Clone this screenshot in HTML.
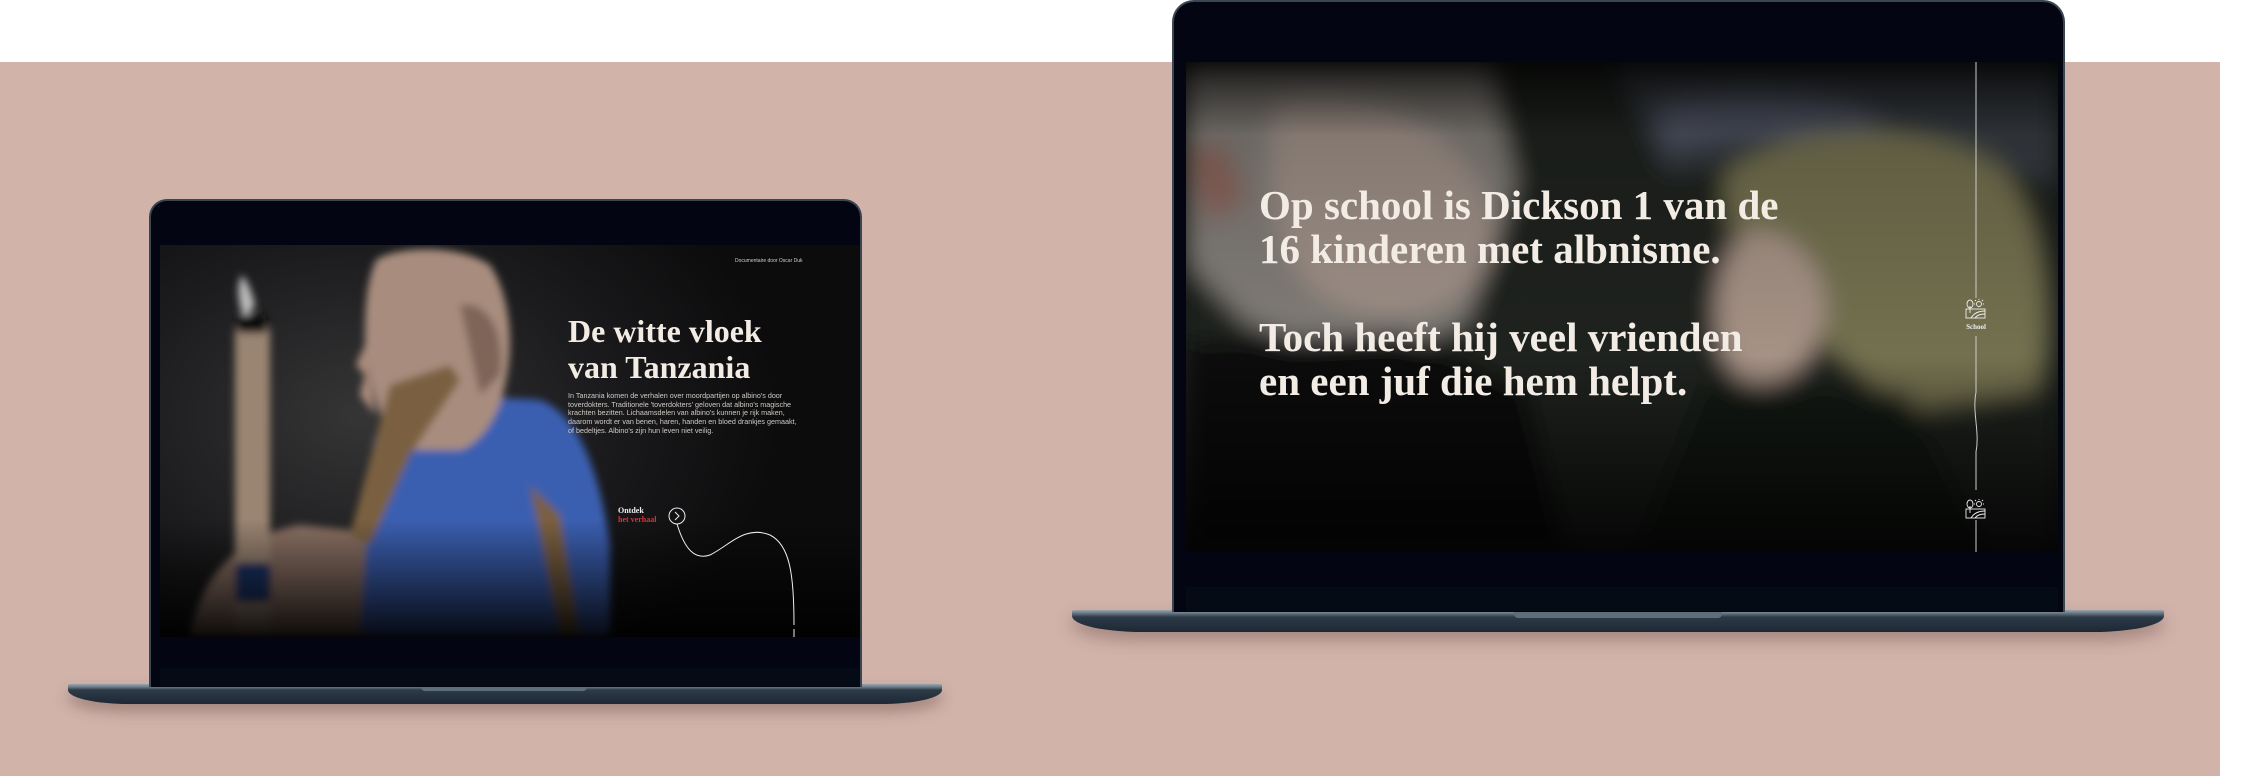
<!DOCTYPE html>
<html><head><meta charset="utf-8"><style>
*{margin:0;padding:0;box-sizing:border-box}
body{width:2254px;height:776px;background:#fff;position:relative;overflow:hidden;font-family:"Liberation Sans",sans-serif}
.abs{position:absolute}
.serif{font-family:"Liberation Serif",serif;font-weight:bold;color:#f3ece4}
</style></head><body>
<div class="abs" style="left:0;top:62px;width:2220px;height:714px;background:#d1b3aa"></div>

<!-- LEFT LAPTOP -->
<div class="abs" style="left:68px;top:684px;width:874px;height:20px;border-radius:2px 2px 60px 60px/2px 2px 14px 14px;background:linear-gradient(#9aa6b0 0,#6c7a86 3px,#2d3a47 6px,#1d2834 100%);box-shadow:0 8px 14px rgba(80,50,45,.35)"></div>
<div class="abs" style="left:421px;top:686px;width:166px;height:5px;background:#5e6d7a;border-radius:0 0 4px 4px"></div>
<div class="abs" style="left:149px;top:199px;width:713px;height:488px;background:#030612;border-radius:18px 18px 0 0;border:2px solid #3a4651;border-bottom:none"></div>
<div class="abs" style="left:160px;top:668px;width:700px;height:18px;background:#050b14"></div>
<div class="abs" style="left:160px;top:245px;width:700px;height:392px;overflow:hidden;background:radial-gradient(ellipse 420px 300px at 200px 170px,#353536,#1a1a1c 60%,#0c0c0d)">
 <svg width="700" height="392" style="position:absolute;left:0;top:0">
  <defs><filter id="b"><feGaussianBlur stdDeviation="4"/></filter>
  <linearGradient id="fade" x1="0" y1="0" x2="0" y2="1"><stop offset=".7" stop-color="#000" stop-opacity="0"/><stop offset="1" stop-color="#000" stop-opacity=".9"/></linearGradient></defs>
  <g filter="url(#b)">
   <path d="M30 392 C40 330 80 290 140 280 L240 290 L250 392Z" fill="#8a6f63"/>
   <path d="M213 200 C220 170 250 150 290 150 L380 155 C420 170 440 230 450 300 L450 392 L200 392Z" fill="#3a5fb0"/>
   <path d="M216 15 C240 0 300 0 330 20 C350 50 355 100 345 140 C340 170 320 200 300 205 L250 205 C225 190 215 160 210 130 L205 100 C205 70 205 40 216 15Z" fill="#a88d7e"/>
   <path d="M205 100 L196 120 L205 130 L200 150 L215 170Z" fill="#b0907f"/>
   <path d="M300 60 C330 55 345 90 340 130 L320 150Z" fill="#7e6558"/>
   <rect x="75" y="82" width="35" height="305" rx="4" fill="#9a8472"/>
   <path d="M82 30 C76 40 78 60 85 75 L95 60 C92 50 90 40 82 30Z" fill="#bbb"/>
   <rect x="78" y="70" width="28" height="18" fill="#111"/>
   <path d="M230 140 L290 120 L300 135 L250 210 L210 300 L190 290Z" fill="#7a6040"/>
   <path d="M370 240 L400 270 L420 392 L400 392Z" fill="#7a6040"/>
   <rect x="75" y="318" width="36" height="40" rx="6" fill="#1e3668"/>
  </g>
  <rect width="700" height="392" fill="url(#fade)"/>
 </svg>
 <div class="abs" style="left:575px;top:13px;font-size:5px;color:#cfcfcf">Documentaire door Oscar Duk</div>
 <div class="abs serif" style="left:408px;top:68px;font-size:32px;line-height:36px;white-space:nowrap">De witte vloek<br>van Tanzania</div>
 <div class="abs" style="left:408px;top:147px;width:232px;font-size:7.2px;line-height:8.7px;color:#cfcac4">In Tanzania komen de verhalen over moordpartijen op albino's door toverdokters. Traditionele 'toverdokters' geloven dat albino's magische krachten bezitten. Lichaamsdelen van albino's kunnen je rijk maken, daarom wordt er van benen, haren, handen en bloed drankjes gemaakt, of bedeltjes. Albino's zijn hun leven niet veilig.</div>
 <div class="abs" style="left:458px;top:261px;font-family:'Liberation Serif',serif;font-weight:bold;font-size:8px;line-height:9px;color:#eee">Ontdek<br><span style="color:#d8323a">het verhaal</span></div>
 <svg class="abs" style="left:0;top:0" width="700" height="392">
  <circle cx="517" cy="271" r="8" fill="none" stroke="#eee" stroke-width="1"/>
  <path d="M515 267 L519 271 L515 275" fill="none" stroke="#eee" stroke-width="1"/>
  <path d="M517 279 C525 305 535 315 550 310 C570 300 585 280 610 290 C630 300 634 330 634 380" fill="none" stroke="#eee" stroke-width="1"/>
  <line x1="634" y1="384" x2="634" y2="392" stroke="#eee" stroke-width="1"/>
 </svg>
</div>

<!-- RIGHT LAPTOP -->
<div class="abs" style="left:1072px;top:610px;width:1092px;height:22px;border-radius:2px 2px 70px 70px/2px 2px 16px 16px;background:linear-gradient(#9aa6b0 0,#6c7a86 3px,#2d3a47 7px,#1d2834 100%);box-shadow:0 8px 16px rgba(80,50,45,.35)"></div>
<div class="abs" style="left:1514px;top:612px;width:208px;height:6px;background:#5e6d7a;border-radius:0 0 4px 4px"></div>
<div class="abs" style="left:1172px;top:0;width:893px;height:612px;background:#030612;border-radius:22px 22px 0 0;border:2px solid #3a4651;border-bottom:none"></div>
<div class="abs" style="left:1186px;top:587px;width:872px;height:24px;background:#050b14"></div>
<div class="abs" style="left:1186px;top:62px;width:872px;height:490px;overflow:hidden;background:#1a1c1a">
 <svg width="872" height="490" style="position:absolute;left:0;top:0">
  <defs><filter id="b2"><feGaussianBlur stdDeviation="12"/></filter>
  <linearGradient id="f2" x1="0" y1="0" x2="0" y2="1"><stop offset="0" stop-color="#000" stop-opacity=".8"/><stop offset=".15" stop-color="#000" stop-opacity=".25"/><stop offset=".6" stop-color="#000" stop-opacity=".1"/><stop offset="1" stop-color="#000" stop-opacity=".85"/></linearGradient></defs>
  <g filter="url(#b2)">
   <rect width="872" height="490" fill="#222624"/>
   <path d="M430 0 L872 0 L872 120 L680 80 L480 110Z" fill="#3e424a"/>
   <path d="M470 40 C560 20 660 30 700 60 L650 90 C600 70 530 70 480 90Z" fill="#5a5f70"/>
   <path d="M0 0 L300 0 L330 120 L280 260 L180 300 L60 260 L0 200Z" fill="#8f8a84"/>
   <path d="M0 90 L40 80 L60 140 L20 160Z" fill="#9a6f65"/>
   <path d="M90 40 C180 20 280 60 310 160 C310 230 250 260 180 250 C110 240 70 170 90 40Z" fill="#b0a096"/>
   <path d="M0 280 L220 270 L340 330 L380 490 L0 490Z" fill="#0d0f0d"/>
   <path d="M540 110 C620 50 760 60 820 110 C860 170 870 260 850 330 L720 350 L600 250 C560 200 530 150 540 110Z" fill="#807d58"/>
   <path d="M560 170 C600 160 640 200 640 250 C630 300 600 330 560 320 C520 300 520 200 560 170Z" fill="#b8a294"/>
   <path d="M520 320 L720 330 L800 490 L450 490Z" fill="#181a19"/>
  </g>
  <rect width="872" height="490" fill="url(#f2)"/>
 </svg>
 <div class="abs serif" style="left:73px;top:121px;font-size:41px;line-height:44px;white-space:nowrap">Op school is Dickson 1 van de<br>16 kinderen met albnisme.<br><br>Toch heeft hij veel vrienden<br>en een juf die hem helpt.</div>
 <svg class="abs" style="left:0;top:0" width="872" height="490">
  <line x1="790" y1="0" x2="790" y2="236" stroke="#ccc" stroke-width="1"/>
  <path d="M790 274 L790 330 C786 350 794 370 790 390 L790 428" fill="none" stroke="#ccc" stroke-width="1"/>
  <line x1="790" y1="458" x2="790" y2="490" stroke="#ccc" stroke-width="1"/>
  <g fill="none" stroke="#eee" stroke-width=".9">
   <g transform="translate(780,238)"><ellipse cx="4" cy="4" rx="3" ry="4"/><line x1="4" y1="6" x2="4" y2="13"/><circle cx="13" cy="4" r="2.5"/><path d="M13 0v-1M17 4h1M9 4h-1M16 1l1-1M10 1l-1-1"/><rect x="0" y="9" width="19" height="9"/><path d="M5 18 C8 13 13 11 19 11 M9 18 C11 15 15 14 19 14"/></g>
   <g transform="translate(780,438)"><ellipse cx="4" cy="4" rx="3" ry="4"/><line x1="4" y1="6" x2="4" y2="13"/><circle cx="13" cy="4" r="2.5"/><path d="M13 0v-1M17 4h1M9 4h-1M16 1l1-1M10 1l-1-1"/><rect x="0" y="9" width="19" height="9"/><path d="M5 18 C8 13 13 11 19 11 M9 18 C11 15 15 14 19 14"/></g>
  </g>
 </svg>
 <div class="abs" style="left:777px;top:261px;width:26px;text-align:center;font-family:'Liberation Serif',serif;font-weight:bold;font-size:7px;color:#eee">School</div>
</div>
</body></html>
